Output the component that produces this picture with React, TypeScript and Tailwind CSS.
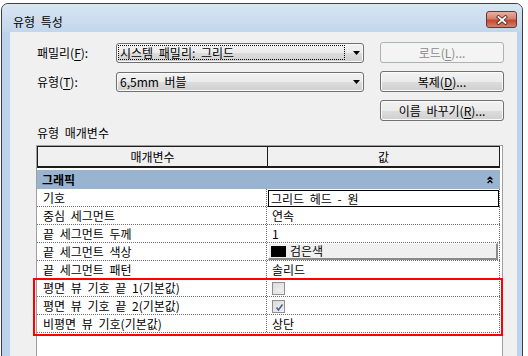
import React from "react";

const DOT = "border-dotted border-[#6f6f6f]";

function U({ children }: { children: React.ReactNode }) {
  return <span className="underline underline-offset-[2px] decoration-1">{children}</span>;
}

function Arrow() {
  return (
    <svg width="7" height="4" viewBox="0 0 7 4" className="block">
      <path d="M0 0 H7 L3.5 4 Z" fill="#000" />
    </svg>
  );
}

function Combo({ children, focus }: { children: React.ReactNode; focus?: boolean }) {
  return (
    <div className="flex h-[20px] w-[248px] items-center rounded-[3px] border border-[#707070] bg-[linear-gradient(to_bottom,#f2f2f2_0%,#ebebeb_50%,#dddddd_50%,#cfcfcf_100%)] pl-[1px] shadow-[inset_0_0_0_1px_#fafafa]">
      <div
        className={`flex h-[15px] w-[227px] items-center pl-[1px] border ${
          focus ? "border-dotted border-black" : "border-transparent"
        }`}
      >
        {children}
      </div>
      <div className="ml-[8px]">
        <Arrow />
      </div>
    </div>
  );
}

function Btn({ children, disabled }: { children: React.ReactNode; disabled?: boolean }) {
  return disabled ? (
    <div className="flex h-[21px] w-[124px] items-center justify-center rounded-[3px] border border-[#adb2b5] bg-[#f4f4f4] text-[#8a8a8a]">
      {children}
    </div>
  ) : (
    <div className="flex h-[21px] w-[124px] items-center justify-center rounded-[3px] border border-[#707070] bg-[linear-gradient(to_bottom,#f2f2f2_0%,#ebebeb_50%,#dddddd_50%,#cfcfcf_100%)] shadow-[inset_0_0_0_1px_#fbfbfb]">
      {children}
    </div>
  );
}

function Row({ label, children }: { label: string; children?: React.ReactNode }) {
  return (
    <div className={`flex h-[18px] w-[463px] border-b ${DOT}`}>
      <div className={`flex w-[230px] items-center border-r pl-[6px] ${DOT}`}>{label}</div>
      <div className={`flex w-[233px] items-center border-r ${DOT}`}>{children}</div>
    </div>
  );
}

function CheckBox({ checked }: { checked?: boolean }) {
  return (
    <div className="ml-[5px] mt-[3px] h-[13px] w-[13px] self-start border border-[#8e8f8f] bg-[linear-gradient(135deg,#d6d6d6,#f7f7f7)] p-[1px]">
      <div className="h-full w-full border border-[#e4e4e4] bg-[linear-gradient(135deg,#dcdcdc,#f4f4f4)]">
        {checked && (
          <svg width="9" height="9" viewBox="0 0 9 9" className="block">
            <path d="M1.5 4.5 L3.5 7 L7.5 1.5" fill="none" stroke="#4a5f94" strokeWidth="1.6" />
          </svg>
        )}
      </div>
    </div>
  );
}

export default function App() {
  return (
    <div className="relative h-[356px] w-[528px] overflow-hidden bg-white pl-[1px] pt-[3px] font-['Noto_Sans_CJK_KR',sans-serif] text-[12px] leading-[16px] text-black [word-spacing:3px]">
      {/* window */}
      <div className="flex h-[420px] w-[522px] flex-col rounded-t-[7px] border border-[#3f3f3f] bg-[#bdd3eb]">
        {/* title bar */}
        <div className="flex h-[28px] items-start rounded-t-[6px] bg-[linear-gradient(to_bottom,#d9e6f3,#c2d6ec)] pl-[11px] pr-[5px]">
          <span className="mt-[10px]">유형 특성</span>
          <div className="ml-auto mt-[7px] flex h-[17px] w-[31px] items-center justify-center rounded-[3px] border border-[#6b342c] bg-[linear-gradient(to_bottom,#e8b0a4_0%,#d6806c_45%,#c3472f_55%,#d2826a_100%)]">
            <svg width="12" height="10" viewBox="0 0 12 10" className="block">
              <path d="M2.5 2 L9.5 8 M9.5 2 L2.5 8" stroke="#4d2620" strokeWidth="3.4" strokeLinecap="square" />
              <path d="M2.5 2 L9.5 8 M9.5 2 L2.5 8" stroke="#ffffff" strokeWidth="1.8" strokeLinecap="square" />
            </svg>
          </div>
        </div>
        {/* body */}
        <div className="flex flex-1">
          <div className="w-[8px]" />
          <div className="flex w-[507px] flex-col bg-[#f0f0f0] pl-[27px] pt-[10px]">
            <div className="flex h-[21px] items-center">
              <div className="w-[79px]">
                패밀리(<U>F</U>):
              </div>
              <Combo focus>시스템 패밀리: 그리드</Combo>
              <div className="ml-[16px]">
                <Btn disabled>
                  로드(<U>L</U>)...
                </Btn>
              </div>
            </div>
            <div className="mt-[8px] flex h-[21px] items-center">
              <div className="w-[79px]">
                유형(<U>T</U>):
              </div>
              <Combo>6,5mm 버블</Combo>
              <div className="ml-[16px]">
                <Btn>
                  복제(<U>D</U>)...
                </Btn>
              </div>
            </div>
            <div className="mt-[8px] flex h-[21px] items-center">
              <div className="ml-[343px]">
                <Btn>
                  이름 바꾸기(<U>R</U>)...
                </Btn>
              </div>
            </div>
            <div className="mt-[4px] h-[16px]">유형 매개변수</div>
            {/* table */}
            <div className="ml-[-1px] mt-[4px] h-[260px] w-[467px] border-l border-r border-t border-[#a0a0a0] bg-white">
              <div className="flex">
                <div className="flex h-[22px] w-[231px] items-center justify-center border-b-2 border-l border-r border-t border-[#1c1c1c] bg-[#f0f0f0]">
                  매개변수
                </div>
                <div className="flex h-[22px] w-[232px] items-center justify-center border-b-2 border-r border-t border-[#1c1c1c] bg-[#f0f0f0]">
                  값
                </div>
              </div>
              <div className="h-[2px]" />
              <div className="flex h-[19px] w-[463px] items-center justify-between bg-[#99b4d1] pl-[5px] pr-[7px]">
                <span className="font-bold">그래픽</span>
                <svg width="6" height="8" viewBox="0 0 6 8" className="block">
                  <path d="M0.6 3.6 L3 1.2 L5.4 3.6 M0.6 7 L3 4.6 L5.4 7" fill="none" stroke="#000" strokeWidth="1.4" />
                </svg>
              </div>
              <Row label="기호">
                <div className="ml-[1px] mt-[1px] flex h-[17px] w-[231px] items-center self-start border border-black pl-[2px]">
                  그리드 헤드 - 원
                </div>
              </Row>
              <Row label="중심 세그먼트">
                <span className="pl-[5px]">연속</span>
              </Row>
              <Row label="끝 세그먼트 두께">
                <span className="pl-[5px]">1</span>
              </Row>
              <Row label="끝 세그먼트 색상">
                <div className="ml-[1px] flex h-[17px] w-[230px] items-center self-start border-b-2 border-l border-r-2 border-t border-b-[#8a8a8a] border-l-white border-r-[#8a8a8a] border-t-white bg-[#f0f0f0] pl-[2px]">
                  <div className="h-[11px] w-[15px] bg-black" />
                  <span className="ml-[4px]">검은색</span>
                </div>
              </Row>
              <Row label="끝 세그먼트 패턴">
                <span className="pl-[5px]">솔리드</span>
              </Row>
              <Row label="평면 뷰 기호 끝 1(기본값)">
                <CheckBox />
              </Row>
              <Row label="평면 뷰 기호 끝 2(기본값)">
                <CheckBox checked />
              </Row>
              <Row label="비평면 뷰 기호(기본값)">
                <span className="pl-[5px]">상단</span>
              </Row>
            </div>
          </div>
          <div className="w-[5px]" />
        </div>
      </div>
      {/* red annotation */}
      <div className="absolute left-[33px] top-[278px] h-[58px] w-[470px] border-2 border-[#ff0000]" />
    </div>
  );
}
